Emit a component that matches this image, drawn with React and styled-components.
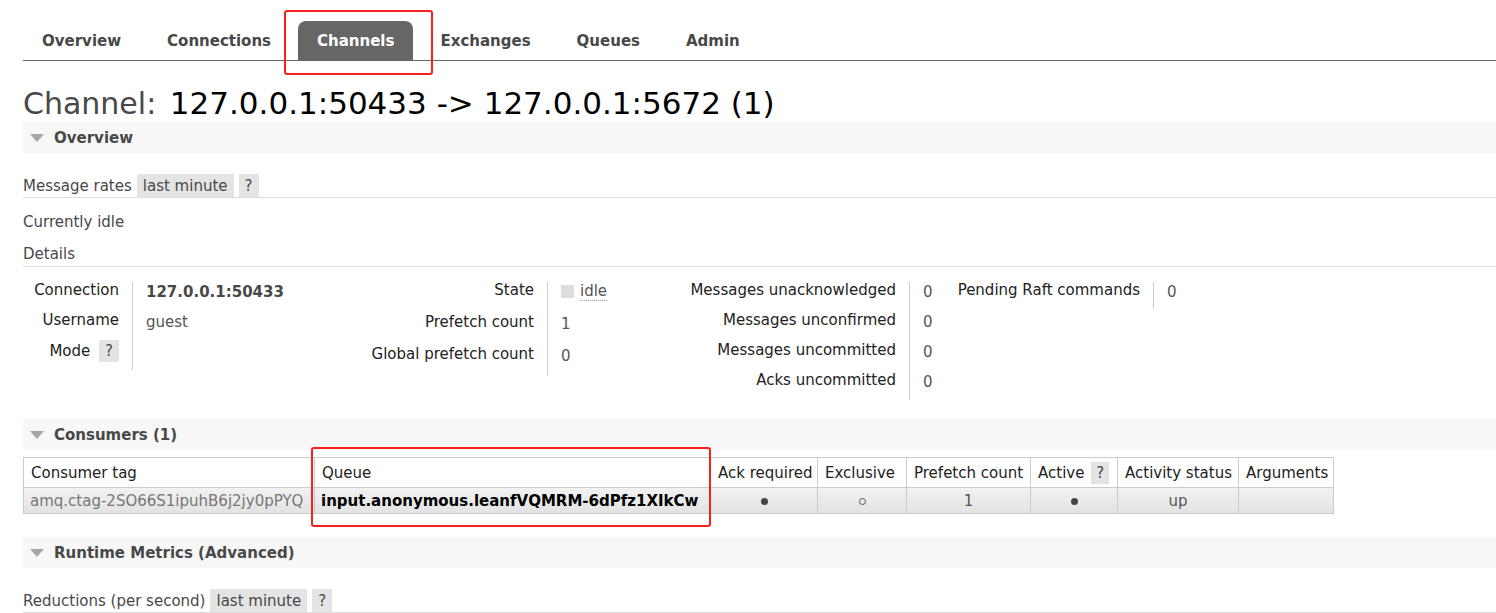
import React from "react";
import styled, { createGlobalStyle } from "styled-components";

const GlobalStyle = createGlobalStyle`
	html, body {
		margin: 0;
		padding: 0;
		background: #fff;
		overflow: hidden;
	}
	body {
		font-family: "DejaVu Sans", Verdana, sans-serif;
		font-size: 15px;
		color: #484848;
	}
`;

const tabs = ["Overview", "Connections", "Channels", "Exchanges", "Queues", "Admin"];

const App = () => {
	return (
		<Page>
			<GlobalStyle />
			<TabBar>
				{tabs.map((t) => (
					<Tab key={t} $active={t === "Channels"}>
						{t}
					</Tab>
				))}
			</TabBar>

			<Title>
				<span>Channel:</span> <b>127.0.0.1:50433 -&gt; 127.0.0.1:5672 (1)</b>
			</Title>

			<SectionHeader>
				<Arrow />
				Overview
			</SectionHeader>

			<RatesRow>
				Message rates
				<Chip>last minute</Chip>
				<Chip>?</Chip>
			</RatesRow>
			<Note>Currently idle</Note>
			<SubTitle>Details</SubTitle>

			<FactsRow>
				<Facts $label={109} $value={230} $row={30}>
					<dt>Connection</dt>
					<dd>
						<strong>127.0.0.1:50433</strong>
					</dd>
					<dt>Username</dt>
					<dd>guest</dd>
					<dt>
						Mode <Chip>?</Chip>
					</dt>
					<dd />
				</Facts>
				<Facts $label={185} $value={133} $row={32}>
					<dt>State</dt>
					<dd>
						<StateBox />
						<Dotted>idle</Dotted>
					</dd>
					<dt>Prefetch count</dt>
					<dd>1</dd>
					<dt>Global prefetch count</dt>
					<dd>0</dd>
				</Facts>
				<Facts $label={229} $value={36} $row={30}>
					<dt>Messages unacknowledged</dt>
					<dd>0</dd>
					<dt>Messages unconfirmed</dt>
					<dd>0</dd>
					<dt>Messages uncommitted</dt>
					<dd>0</dd>
					<dt>Acks uncommitted</dt>
					<dd>0</dd>
				</Facts>
				<Facts $label={208} $value={60} $row={29}>
					<dt>Pending Raft commands</dt>
					<dd>0</dd>
				</Facts>
			</FactsRow>

			<SectionHeader>
				<Arrow />
				Consumers (1)
			</SectionHeader>

			<List>
				<colgroup>
					<col style={{ width: 291 }} />
					<col style={{ width: 396 }} />
					<col style={{ width: 107 }} />
					<col style={{ width: 89 }} />
					<col style={{ width: 124 }} />
					<col style={{ width: 87 }} />
					<col style={{ width: 121 }} />
					<col style={{ width: 95 }} />
				</colgroup>
				<thead>
					<tr>
						<th>Consumer tag</th>
						<th>Queue</th>
						<th>Ack required</th>
						<th>Exclusive</th>
						<th>Prefetch count</th>
						<th>
							Active <Chip>?</Chip>
						</th>
						<th>Activity status</th>
						<th>Arguments</th>
					</tr>
				</thead>
				<tbody>
					<tr>
						<Cell $muted>amq.ctag-2SO66S1ipuhB6j2jy0pPYQ</Cell>
						<Cell $bold>input.anonymous.leanfVQMRM-6dPfz1XIkCw</Cell>
						<Cell $center>
							<Dot />
						</Cell>
						<Cell $center>
							<Dot $hollow />
						</Cell>
						<Cell $center>1</Cell>
						<Cell $center>
							<Dot />
						</Cell>
						<Cell $center>up</Cell>
						<Cell />
					</tr>
				</tbody>
			</List>

			<SectionHeader $gap={23}>
				<Arrow />
				Runtime Metrics (Advanced)
			</SectionHeader>

			<RatesRow $top={21}>
				Reductions (per second)
				<Chip>last minute</Chip>
				<Chip>?</Chip>
			</RatesRow>

			<Mark style={{ left: 284, top: 10, width: 149, height: 65 }} />
			<Mark style={{ left: 311, top: 447, width: 400, height: 80 }} />
		</Page>
	);
};

const Page = styled.div`
	position: relative;
	padding: 21px 0 0 23px;
	min-height: 592px;
`;

const TabBar = styled.ul`
	display: flex;
	gap: 8px;
	list-style: none;
	margin: 0;
	padding: 0;
	border-bottom: 1px solid #666;
`;

const Tab = styled.li`
	padding: 1px 19px 0;
	height: 38px;
	line-height: 39px;
	font-weight: bold;
	color: ${(p) => (p.$active ? "#fff" : "#484848")};
	background: ${(p) => (p.$active ? "#666" : "transparent")};
	border-radius: 8px 8px 0 0;
`;

const Title = styled.h1`
	margin: 24px 0 0;
	font-size: 30px;
	font-weight: normal;
	line-height: 36px;
	color: #000;
	white-space: nowrap;
	span {
		color: #484848;
	}
	b {
		font-weight: normal;
		font-size: 31px;
		margin-left: 4px;
	}
`;

const SectionHeader = styled.h2`
	display: flex;
	align-items: center;
	margin: ${(p) => p.$gap || 0}px 0 0;
	height: 31px;
	background: #f7f7f7;
	font-size: 15px;
	font-weight: bold;
	color: #484848;
	white-space: nowrap;
`;

const Arrow = styled.span`
	width: 0;
	height: 0;
	margin: 1px 10px 0 7px;
	border-left: 7px solid transparent;
	border-right: 7px solid transparent;
	border-top: 8px solid #a6a6a6;
`;

const RatesRow = styled.div`
	display: flex;
	align-items: center;
	gap: 5px;
	margin-top: ${(p) => p.$top || 21}px;
	height: 23px;
	border-bottom: 1px solid #ddd;
	white-space: nowrap;
`;

const Chip = styled.span`
	display: inline-block;
	padding: 0 6px;
	height: 23px;
	line-height: 24px;
	background: #e4e4e4;
	color: #484848;
	font-weight: normal;
`;

const Note = styled.p`
	margin: 15px 0 0;
	line-height: 18px;
`;

const SubTitle = styled.p`
	margin: 14px 0 0;
	padding-bottom: 3px;
	line-height: 18px;
	border-bottom: 1px solid #ddd;
`;

const FactsRow = styled.div`
	display: flex;
	align-items: flex-start;
	margin: 13px 0 19px;
	white-space: nowrap;
`;

const Facts = styled.dl`
	display: grid;
	grid-template-columns: ${(p) => p.$label}px ${(p) => p.$value}px;
	margin: 0;
	dt,
	dd {
		height: ${(p) => p.$row}px;
		line-height: 20px;
		margin: 0;
	}
	dt {
		text-align: right;
		padding-right: 13px;
		color: #222;
		${Chip} {
			margin-left: 4px;
			height: 22px;
			line-height: 22px;
		}
	}
	dd {
		display: flex;
		align-items: flex-start;
		padding: 2px 0 0 13px;
		border-left: 1px solid #ccc;
		box-sizing: border-box;
		color: #555;
	}
	dd:nth-of-type(1) {
		margin-top: 2px;
		padding-top: 0;
		height: ${(p) => p.$row - 2}px;
	}
	strong {
		font-weight: bold;
		color: #484848;
	}
`;

const StateBox = styled.span`
	width: 13px;
	height: 13px;
	margin: 3px 6px 0 0;
	background: #ddd;
`;

const Dotted = styled.span`
	border-bottom: 1px dotted #999;
	line-height: 18px;
`;

const List = styled.table`
	table-layout: fixed;
	border-collapse: collapse;
	margin-top: 7px;
	width: 1310px;
	white-space: nowrap;
	th {
		height: 29px;
		padding: 0 7px;
		text-align: left;
		font-weight: normal;
		color: #222;
		background: #fff;
		border: 1px solid #ccc;
		overflow: hidden;
	}
	th ${Chip} {
		height: 22px;
		line-height: 22px;
		padding: 0 5px;
		margin-left: 2px;
	}
	tbody tr {
		background: linear-gradient(#f2f2f2, #e2e2e2);
	}
`;

const Cell = styled.td`
	height: 25px;
	padding: 0 6px;
	border: 1px solid #ccc;
	overflow: hidden;
	text-align: ${(p) => (p.$center ? "center" : "left")};
	color: ${(p) => (p.$bold ? "#000" : p.$muted ? "#777" : "#555")};
	font-weight: ${(p) => (p.$bold ? "bold" : "normal")};
`;

const Dot = styled.span`
	display: inline-block;
	width: ${(p) => (p.$hollow ? 5 : 7)}px;
	height: ${(p) => (p.$hollow ? 5 : 7)}px;
	border-radius: 50%;
	box-sizing: content-box;
	background: ${(p) => (p.$hollow ? "transparent" : "#444")};
	border: ${(p) => (p.$hollow ? "1px solid #555" : "none")};
	vertical-align: middle;
`;

const Mark = styled.div`
	position: absolute;
	box-sizing: border-box;
	border: 2px solid #f5211d;
	border-radius: 3px;
	pointer-events: none;
`;

export default App;
